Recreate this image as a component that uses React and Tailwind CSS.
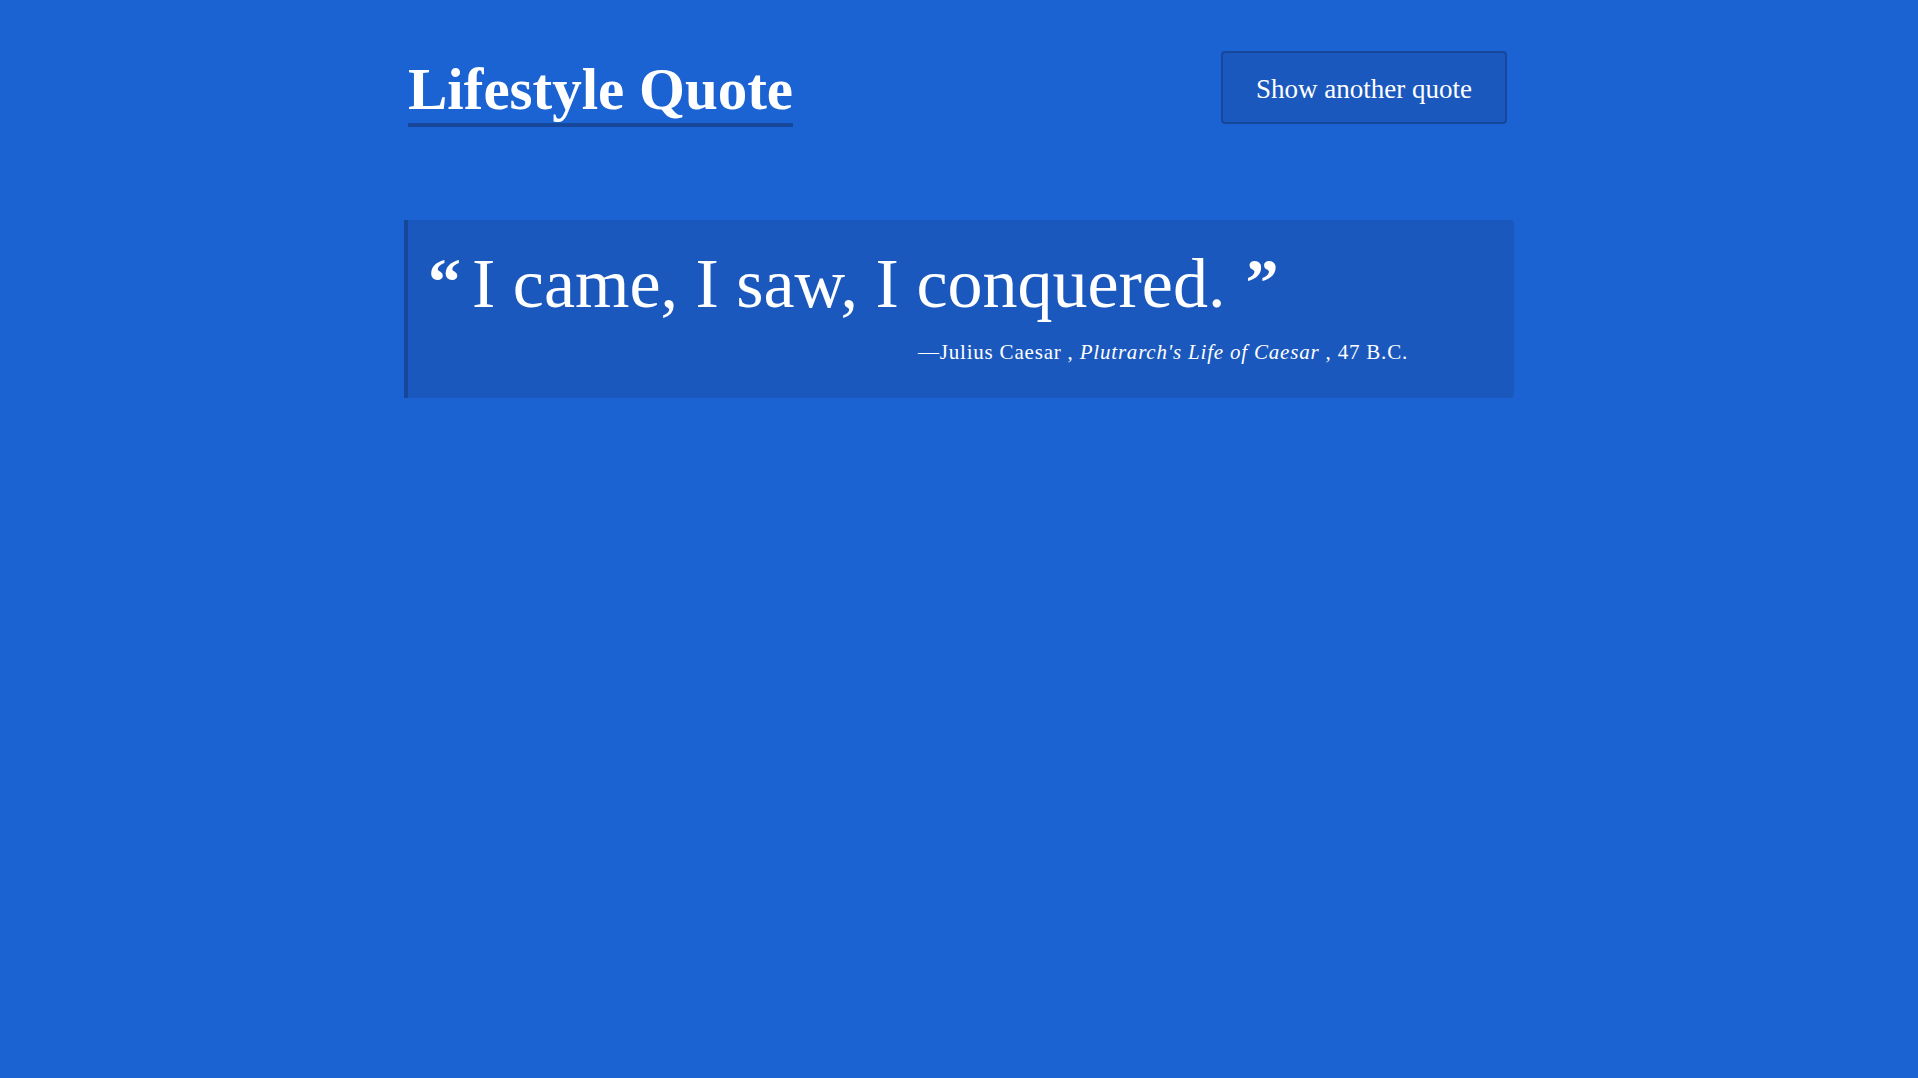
const serif = { fontFamily: '"Liberation Serif", "DejaVu Serif", serif' };

export default function App() {
    return (
        <div className="min-h-screen w-full bg-[#1b63d2] text-white" style={serif}>
            <div className="mx-auto w-[1110px]">
                <header className="flex items-start justify-between pl-1 pr-[7px] pt-[51px]">
                    <h1 className="mt-[9px] border-b-4 border-[#17479b] pb-[4px] text-[59px] font-bold leading-none">
                        Lifestyle Quote
                    </h1>
                    <button className="flex h-[73px] w-[286px] items-center justify-center rounded-[4px] border-2 border-[#17479b] bg-[#1a58bd] pt-1 text-[27px] text-white">
                        Show another quote
                    </button>
                </header>

                <blockquote className="mt-[93px] rounded-r-[4px] border-l-4 border-[#17479b] bg-[#1a58bd] pb-[29px] pl-[20px] pt-[22px]">
                    <div className="flex items-start">
                        <span className="mr-[11px] mt-[7px] text-[66px] font-bold leading-none">“</span>
                        <span className="text-[70px] leading-[1.2]">I came, I saw, I conquered.</span>
                        <span className="ml-[20px] mt-[7px] text-[66px] font-bold leading-none">”</span>
                    </div>
                    <p className="mt-[11px] pr-[106px] text-right text-[21px] leading-[1.5] tracking-[0.8px]">
                        —Julius Caesar , <cite className="italic">Plutrarch's Life of Caesar</cite> , 47 B.C.
                    </p>
                </blockquote>
            </div>
        </div>
    );
}
